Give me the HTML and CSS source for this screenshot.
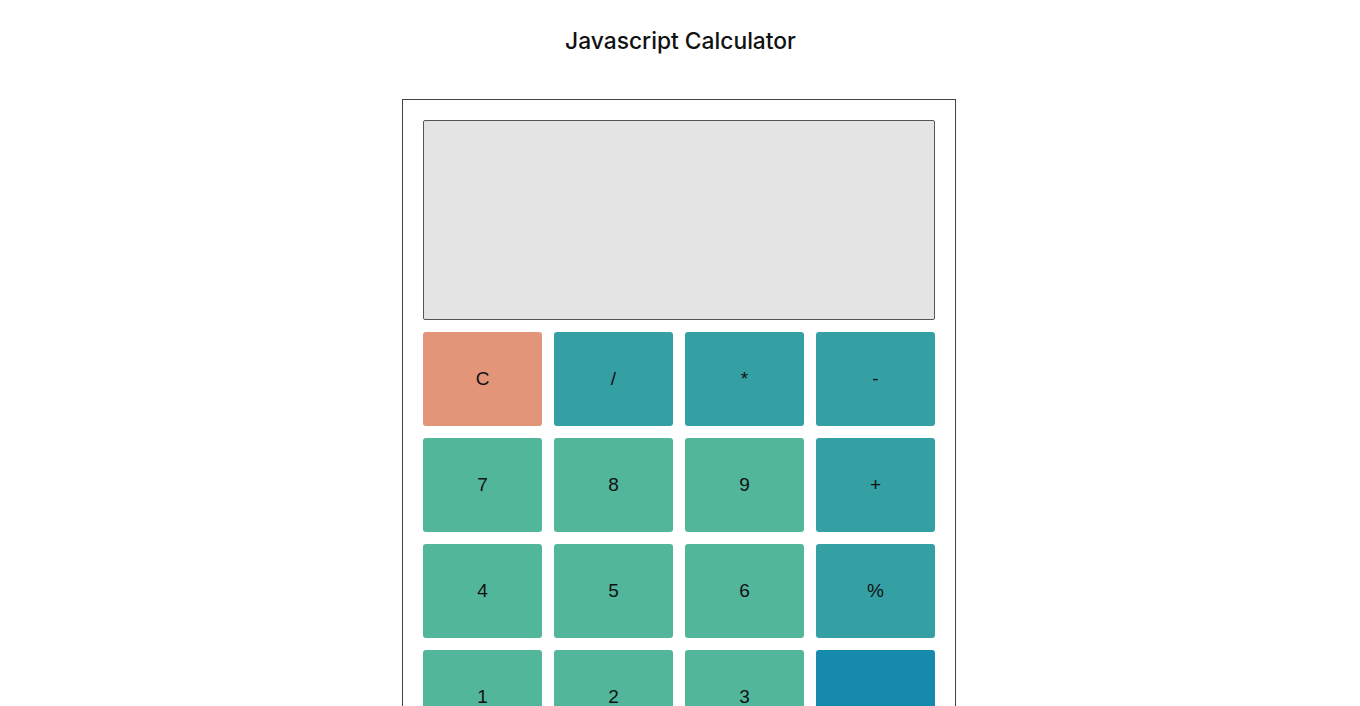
FILE: index.html
```html
<!DOCTYPE html>
<html lang="en">
<head>
<meta charset="UTF-8">
<meta name="viewport" content="width=device-width, initial-scale=1.0">
<title>Javascript Calculator</title>
<link rel="stylesheet" href="styles.css">
</head>
<body>
<h1>Javascript Calculator</h1>
<div class="calculator">
  <div class="screen" id="screen"></div>
  <div class="keys">
    <button class="key key-clear">C</button>
    <button class="key key-op">/</button>
    <button class="key key-op">*</button>
    <button class="key key-op">-</button>
    <button class="key">7</button>
    <button class="key">8</button>
    <button class="key">9</button>
    <button class="key key-op">+</button>
    <button class="key">4</button>
    <button class="key">5</button>
    <button class="key">6</button>
    <button class="key key-op">%</button>
    <button class="key">1</button>
    <button class="key">2</button>
    <button class="key">3</button>
    <button class="key key-equal">=</button>
    <button class="key">0</button>
    <button class="key">.</button>
  </div>
</div>
</body>
</html>
```

FILE: styles.css
```css
body {
  margin: 0;
  padding-right: 2px;
  font-family: 'Liberation Sans', Arial, sans-serif;
  background-color: white;
  display: flex;
  flex-direction: column;
  align-items: center;
}
h1 {
  font-family: 'Inter', sans-serif;
  font-weight: 500;
  font-size: 22.8px;
  line-height: 26px;
  color: #111;
  margin: 28px 0 45px;
  padding-left: 3px;
}
.calculator {
  width: 512px;
  padding: 20px;
  border: 1px solid #444;
}
.screen {
  height: 198px;
  background-color: #e4e4e4;
  border: 1px solid #555;
  border-radius: 2px;
  margin-bottom: 12px;
}
.keys {
  display: grid;
  grid-template-columns: repeat(4, 1fr);
  gap: 12px;
}
.key {
  height: 94px;
  border: none;
  border-radius: 3px;
  background-color: #52b69a;
  color: #111;
  font-family: 'Liberation Sans', Arial, sans-serif;
  font-size: 19px;
  cursor: pointer;
}
.key-op {
  background-color: #34a0a4;
}
.key-clear {
  background-color: #e29578;
}
.key-equal {
  background-color: #168aad;
  color: transparent;
}
```
